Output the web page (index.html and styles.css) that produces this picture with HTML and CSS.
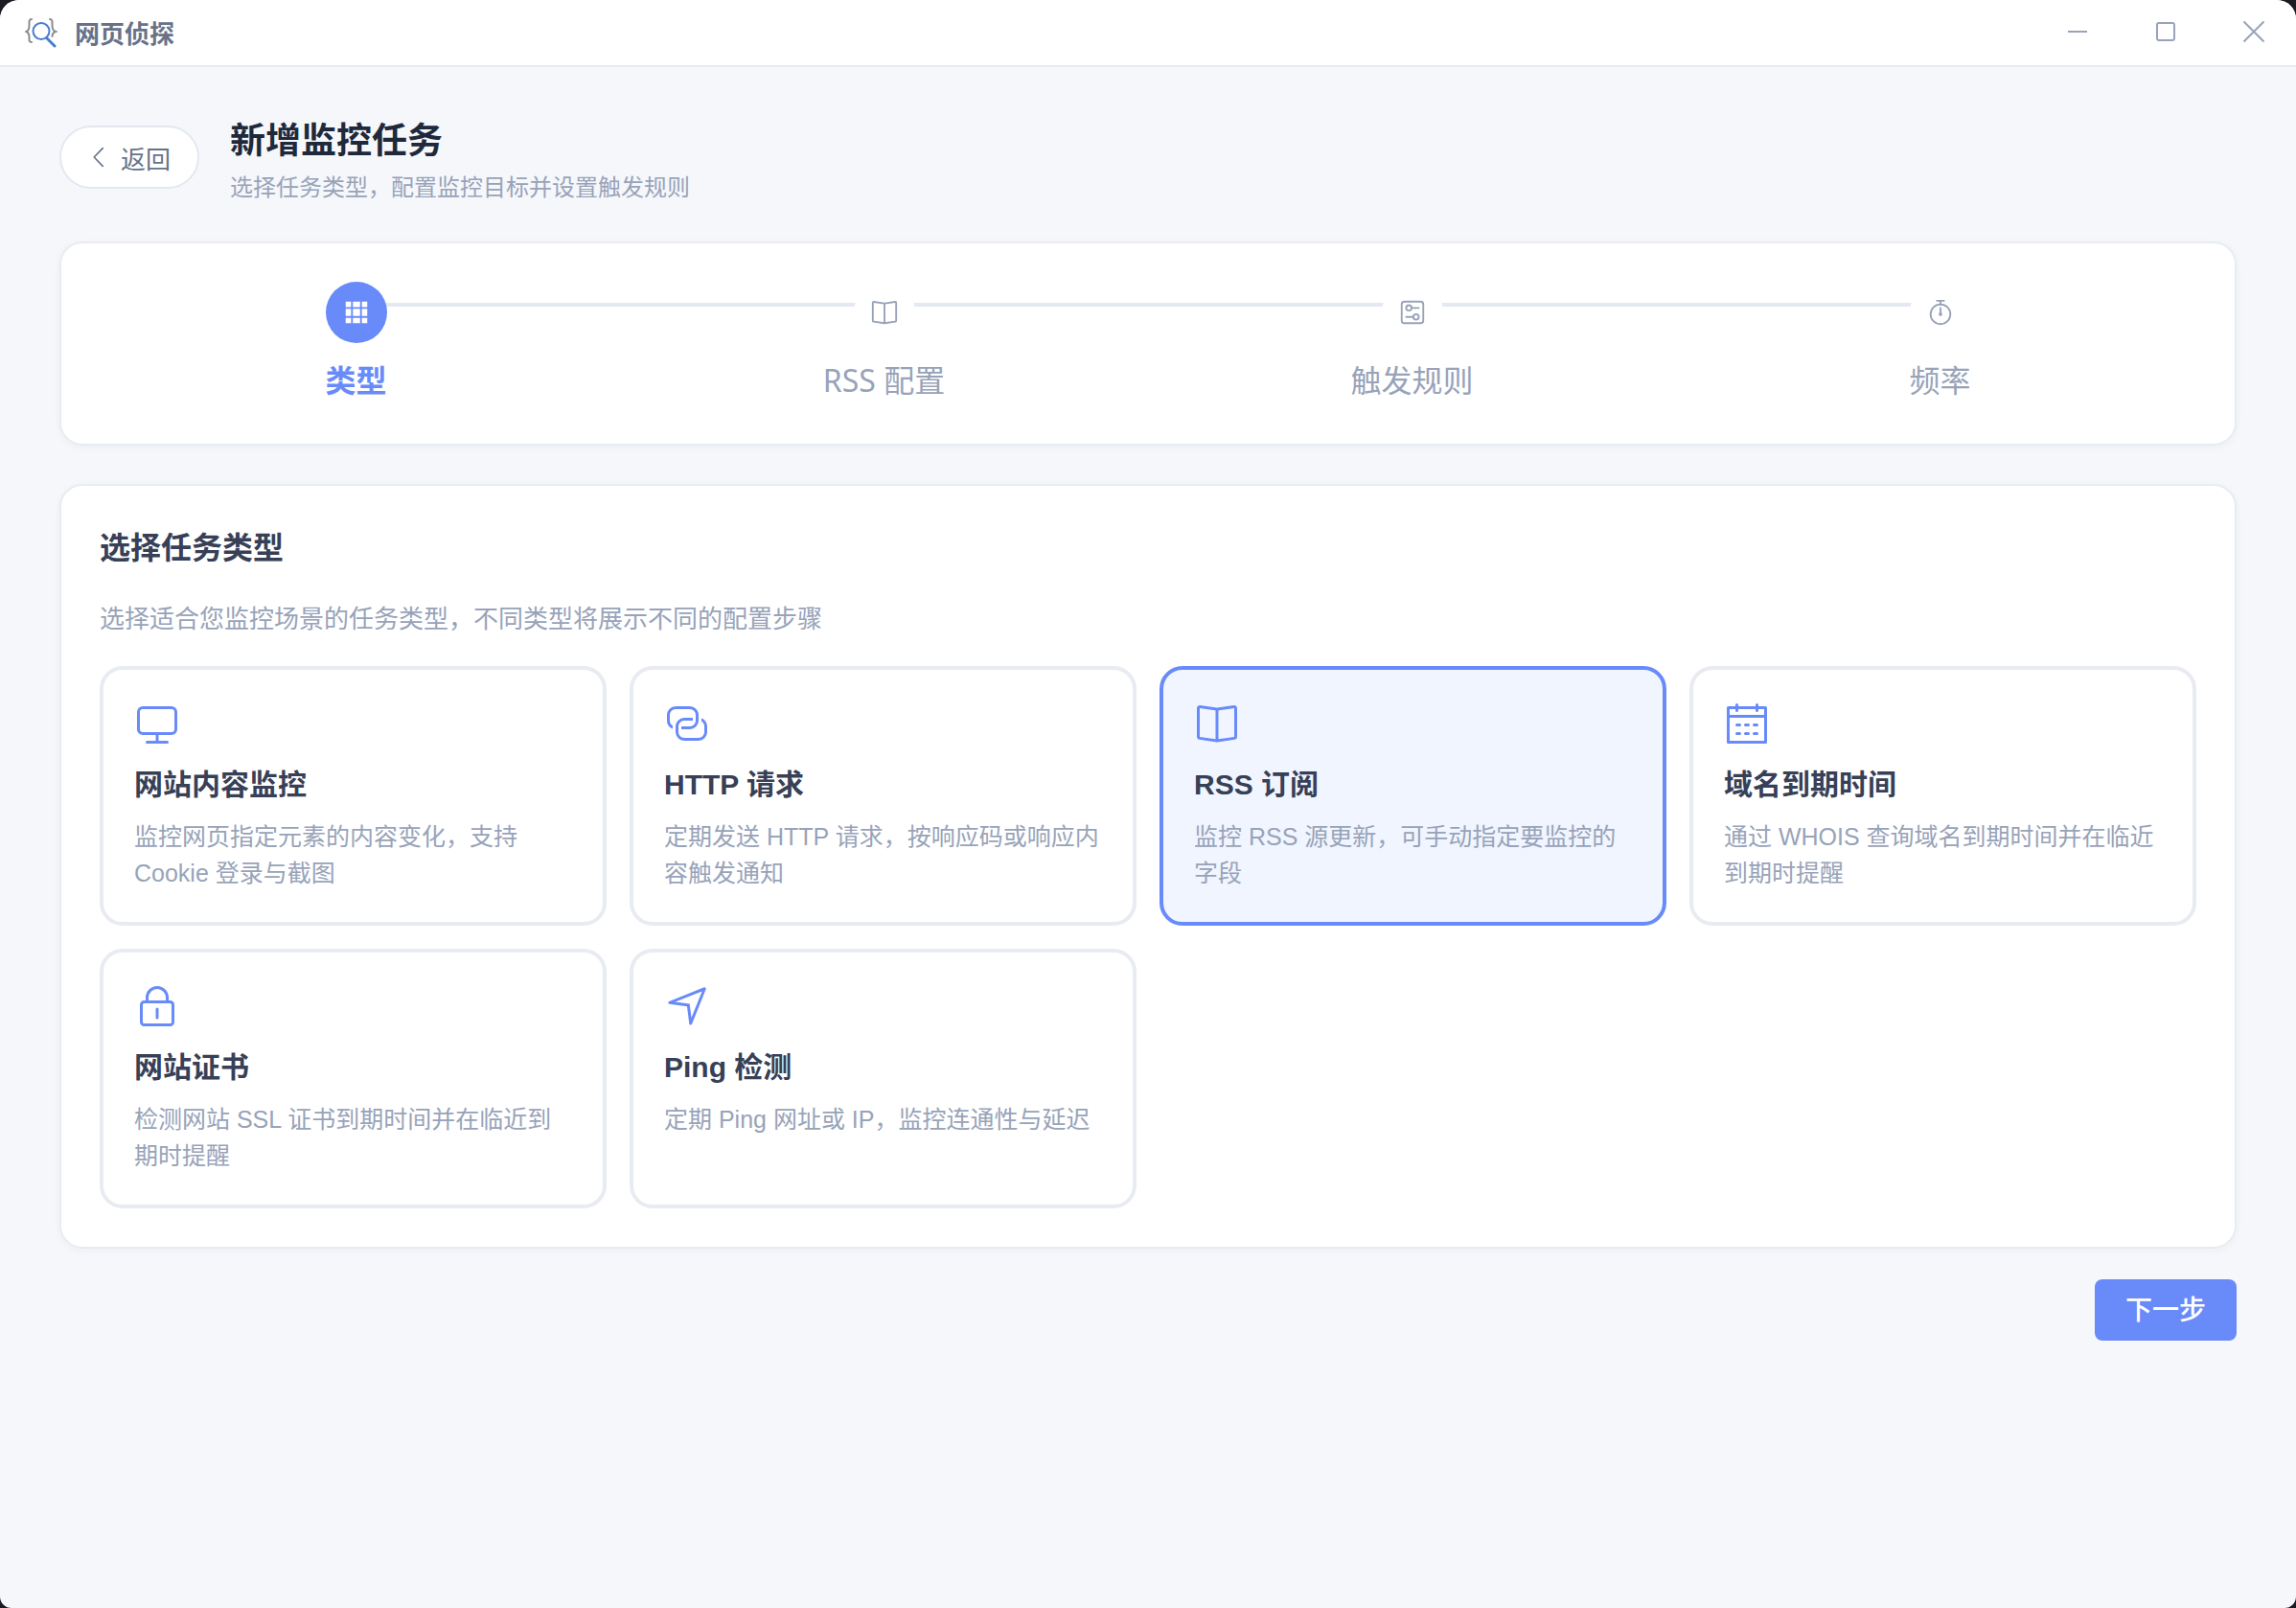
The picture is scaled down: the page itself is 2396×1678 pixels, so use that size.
FILE: index.html
```html
<!DOCTYPE html>
<html lang="zh-CN">
<head>
  <meta charset="UTF-8">
  <meta name="viewport" content="width=device-width, initial-scale=1">
  <title>网页侦探</title>
  <link rel="stylesheet" href="styles.css">
</head>
<body>

  <div class="window">
    <header class="titlebar">
      <div class="brand">
        <svg class="brand-logo" viewBox="0 0 34 34" fill="none" stroke-linecap="round">
          <path d="M7 4C4 4 4.500 7 4.500 10.500S4 16 1.500 17C4 18 4.500 20 4.500 23S4 28 7 28" stroke="#8b8b93" stroke-width="2"/>
          <path d="M26 4C29 4 28.500 7 28.500 10.500S29 16 32 17C29 18 28.500 20 28.500 22" stroke="#8b8b93" stroke-width="2"/>
          <circle cx="17" cy="16.500" r="8.500" stroke="#4a7bd0" stroke-width="2"/>
          <path d="M23 24L31 32" stroke="#4a7bd0" stroke-width="3"/>
        </svg>
        <span>网页侦探</span>
      </div>
      <div class="window-controls">
        <button type="button" aria-label="最小化">
          <svg viewBox="0 0 24 24"><path d="M2 12h20"/></svg>
        </button>
        <button type="button" aria-label="最大化">
          <svg viewBox="0 0 24 24"><rect x="3" y="3" width="18" height="18" rx="2"/></svg>
        </button>
        <button type="button" aria-label="关闭">
          <svg viewBox="0 0 24 24"><path d="M1.500 1.500l21 21M22.500 1.500l-21 21"/></svg>
        </button>
      </div>
    </header>

    <main class="page">
      <div class="page-header">
        <button type="button" class="back-btn">
          <svg class="icon" viewBox="0 0 1024 1024"><path d="M609.408 149.376 277.760 489.600a32 32 0 0 0 0 44.672l331.648 340.352a29.120 29.120 0 0 0 41.728 0 30.592 30.592 0 0 0 0-42.752L339.264 511.936l311.872-319.872a30.592 30.592 0 0 0 0-42.688 29.120 29.120 0 0 0-41.728 0z"/></svg>
          返回
        </button>
        <div>
          <h1>新增监控任务</h1>
          <p>选择任务类型，配置监控目标并设置触发规则</p>
        </div>
      </div>

      <ol class="panel steps">
        <li class="step active">
          <span class="step-icon">
            <svg class="icon" viewBox="0 0 1024 1024"><path d="M640 384v256H384V384h256zm64 0h192v256H704V384zm-64 512H384V704h256v192zm64 0V704h192v192H704zm-64-768v192H384V128h256zm64 0h192v192H704V128zM320 384v256H128V384h192zm0 512H128V704h192v192zm0-768v192H128V128h192z"/></svg>
          </span>
          <span class="step-title">类型</span>
        </li>
        <li class="step">
          <span class="step-icon">
            <svg class="icon" viewBox="0 0 1024 1024"><path d="m512 863.360 384-54.848v-638.720L525.568 222.720a96 96 0 0 1-27.136 0L128 169.792v638.720l384 54.848zM137.024 106.432l370.432 52.928a32 32 0 0 0 9.088 0l370.432-52.928A64 64 0 0 1 960 169.792v638.720a64 64 0 0 1-54.976 63.360l-388.480 55.488a32 32 0 0 1-9.088 0l-388.480-55.488A64 64 0 0 1 64 808.512v-638.720a64 64 0 0 1 73.024-63.360z"/><path d="M480 192h64v704h-64z"/></svg>
          </span>
          <span class="step-title">RSS 配置</span>
        </li>
        <li class="step">
          <span class="step-icon">
            <svg class="icon" viewBox="0 0 1024 1024"><path d="M224 160a64 64 0 0 0-64 64v576a64 64 0 0 0 64 64h576a64 64 0 0 0 64-64V224a64 64 0 0 0-64-64H224zm0-64h576a128 128 0 0 1 128 128v576a128 128 0 0 1-128 128H224A128 128 0 0 1 96 800V224A128 128 0 0 1 224 96z"/><path d="M384 416a64 64 0 1 0 0-128 64 64 0 0 0 0 128zm0 64a128 128 0 1 1 0-256 128 128 0 0 1 0 256z"/><path d="M480 320h256q32 0 32 32t-32 32H480q-32 0-32-32t32-32zm160 416a64 64 0 1 0 0-128 64 64 0 0 0 0 128zm0 64a128 128 0 1 1 0-256 128 128 0 0 1 0 256z"/><path d="M288 640h256q32 0 32 32t-32 32H288q-32 0-32-32t32-32z"/></svg>
          </span>
          <span class="step-title">触发规则</span>
        </li>
        <li class="step">
          <span class="step-icon">
            <svg class="icon" viewBox="0 0 1024 1024"><path d="M512 896a320 320 0 1 0 0-640 320 320 0 0 0 0 640zm0 64a384 384 0 1 1 0-768 384 384 0 0 1 0 768z"/><path d="M512 320a32 32 0 0 1 32 32l-.512 224a32 32 0 1 1-64 0L480 352a32 32 0 0 1 32-32z"/><path d="M448 576a64 64 0 1 0 128 0 64 64 0 1 0-128 0zm96-448v128h-64V128h-96a32 32 0 0 1 0-64h256a32 32 0 1 1 0 64h-96z"/></svg>
          </span>
          <span class="step-title">频率</span>
        </li>
      </ol>

      <section class="panel types">
        <h2>选择任务类型</h2>
        <p class="hint">选择适合您监控场景的任务类型，不同类型将展示不同的配置步骤</p>

        <div class="type-grid">
          <button type="button" class="type-card">
            <svg class="icon" viewBox="0 0 1024 1024"><path d="M544 768v128h192a32 32 0 1 1 0 64H288a32 32 0 1 1 0-64h192V768H192A128 128 0 0 1 64 640V256a128 128 0 0 1 128-128h640a128 128 0 0 1 128 128v384a128 128 0 0 1-128 128H544zM192 192a64 64 0 0 0-64 64v384a64 64 0 0 0 64 64h640a64 64 0 0 0 64-64V256a64 64 0 0 0-64-64H192z"/></svg>
            <span class="type-name">网站内容监控</span>
            <span class="type-desc">监控网页指定元素的内容变化，支持 Cookie 登录与截图</span>
          </button>

          <button type="button" class="type-card">
            <svg class="icon" viewBox="0 0 1024 1024"><path d="M640 384v64H448a128 128 0 0 0-128 128v128a128 128 0 0 0 128 128h320a128 128 0 0 0 128-128V576a128 128 0 0 0-64-110.848V394.880c74.560 26.368 128 97.472 128 181.056v128a192 192 0 0 1-192 192H448a192 192 0 0 1-192-192V576a192 192 0 0 1 192-192h192z"/><path d="M384 640v-64h192a128 128 0 0 0 128-128V320a128 128 0 0 0-128-128H256a128 128 0 0 0-128 128v128a128 128 0 0 0 64 110.848v70.272A192.064 192.064 0 0 1 64 448V320a192 192 0 0 1 192-192h320a192 192 0 0 1 192 192v128a192 192 0 0 1-192 192H384z"/></svg>
            <span class="type-name">HTTP 请求</span>
            <span class="type-desc">定期发送 HTTP 请求，按响应码或响应内容触发通知</span>
          </button>

          <button type="button" class="type-card selected" aria-pressed="true">
            <svg class="icon" viewBox="0 0 1024 1024"><path d="m512 863.360 384-54.848v-638.720L525.568 222.720a96 96 0 0 1-27.136 0L128 169.792v638.720l384 54.848zM137.024 106.432l370.432 52.928a32 32 0 0 0 9.088 0l370.432-52.928A64 64 0 0 1 960 169.792v638.720a64 64 0 0 1-54.976 63.360l-388.480 55.488a32 32 0 0 1-9.088 0l-388.480-55.488A64 64 0 0 1 64 808.512v-638.720a64 64 0 0 1 73.024-63.360z"/><path d="M480 192h64v704h-64z"/></svg>
            <span class="type-name">RSS 订阅</span>
            <span class="type-desc">监控 RSS 源更新，可手动指定要监控的字段</span>
          </button>

          <button type="button" class="type-card">
            <svg class="icon" viewBox="0 0 1024 1024"><path d="M128 384v512h768V192H768v32a32 32 0 1 1-64 0v-32H320v32a32 32 0 0 1-64 0v-32H128v128h768v64H128zm192-256h384V96a32 32 0 1 1 64 0v32h160a32 32 0 0 1 32 32v768a32 32 0 0 1-32 32H96a32 32 0 0 1-32-32V160a32 32 0 0 1 32-32h160V96a32 32 0 0 1 64 0v32zm-32 384h64a32 32 0 0 1 0 64h-64a32 32 0 0 1 0-64zm0 192h64a32 32 0 1 1 0 64h-64a32 32 0 1 1 0-64zm192-192h64a32 32 0 0 1 0 64h-64a32 32 0 0 1 0-64zm0 192h64a32 32 0 1 1 0 64h-64a32 32 0 1 1 0-64zm192-192h64a32 32 0 1 1 0 64h-64a32 32 0 1 1 0-64zm0 192h64a32 32 0 1 1 0 64h-64a32 32 0 1 1 0-64z"/></svg>
            <span class="type-name">域名到期时间</span>
            <span class="type-desc">通过 WHOIS 查询域名到期时间并在临近到期时提醒</span>
          </button>

          <button type="button" class="type-card">
            <svg class="icon" viewBox="0 0 1024 1024"><path d="M224 448a32 32 0 0 0-32 32v384a32 32 0 0 0 32 32h576a32 32 0 0 0 32-32V480a32 32 0 0 0-32-32H224zm0-64h576a96 96 0 0 1 96 96v384a96 96 0 0 1-96 96H224a96 96 0 0 1-96-96V480a96 96 0 0 1 96-96z"/><path d="M512 544a32 32 0 0 1 32 32v192a32 32 0 1 1-64 0V576a32 32 0 0 1 32-32zm192-160v-64a192 192 0 1 0-384 0v64h384zM512 64a256 256 0 0 1 256 256v128H256V320A256 256 0 0 1 512 64z"/></svg>
            <span class="type-name">网站证书</span>
            <span class="type-desc">检测网站 SSL 证书到期时间并在临近到期时提醒</span>
          </button>

          <button type="button" class="type-card">
            <svg class="icon" viewBox="0 0 1024 1024"><path d="m249.600 417.088 319.744 43.072 39.168 310.272L845.120 178.880 249.600 417.088zm-129.024 47.168a32 32 0 0 1-7.680-61.440l777.792-311.040a32 32 0 0 1 41.600 41.600l-310.720 775.680a32 32 0 0 1-61.440-7.808L512 516.992l-391.424-52.736z"/></svg>
            <span class="type-name">Ping 检测</span>
            <span class="type-desc">定期 Ping 网址或 IP，监控连通性与延迟</span>
          </button>
        </div>
      </section>

      <div class="actions">
        <button type="button" class="next-btn">下一步</button>
      </div>
    </main>
  </div>

</body>
</html>
```
FILE: styles.css
```css
* {
  box-sizing: border-box;
}

body {
  margin: 0;
  background: #1c1a22;
  font-family: "Liberation Sans", "Noto Sans CJK SC", sans-serif;
  color: #374056;
}

button {
  font-family: inherit;
  cursor: pointer;
}

h1, h2, p, ol {
  margin: 0;
  padding: 0;
}

.icon {
  display: block;
  fill: currentColor;
  flex-shrink: 0;
}

.window {
  min-height: 100vh;
  background: #f5f7fb;
  border-radius: 20px 20px 12px 12px;
  overflow: hidden;
}

/* title bar */
.titlebar {
  display: flex;
  justify-content: space-between;
  height: 70px;
  padding-bottom: 2px;
  background: #fff;
  border-bottom: 2px solid #e7eaf0;
}

.brand {
  display: flex;
  align-items: center;
  gap: 18px;
  padding-left: 26px;
  font-size: 26px;
  font-weight: 600;
  color: #67728a;
}

.brand-logo {
  width: 34px;
  height: 34px;
}

.window-controls {
  display: flex;
  gap: 4px;
}

.window-controls button {
  display: flex;
  align-items: center;
  justify-content: center;
  width: 88px;
  padding: 0;
  border: 0;
  background: none;
}

.window-controls svg {
  width: 24px;
  height: 24px;
  fill: none;
  stroke: #98a3b9;
  stroke-width: 2;
}

/* page */
.page {
  padding: 46px 62px;
}

.page-header {
  display: flex;
  align-items: center;
  gap: 32px;
  margin-bottom: 40px;
}

.back-btn {
  display: flex;
  align-items: center;
  gap: 8px;
  height: 66px;
  padding: 0 28px 0 26px;
  border: 2px solid #e3e8f0;
  border-radius: 33px;
  background: #fff;
  color: #67728a;
  font-size: 26px;
}

.back-btn .icon {
  width: 28px;
  height: 28px;
}

.page-header h1 {
  font-size: 37px;
  line-height: 64px;
  color: #1e293b;
}

.page-header p {
  font-size: 24px;
  line-height: 32px;
  color: #98a3b9;
}

.panel {
  background: #fff;
  border: 2px solid #e8ecf1;
  border-radius: 24px;
  box-shadow: 0 2px 8px rgba(30, 41, 59, 0.04);
}

/* steps */
.steps {
  display: flex;
  padding: 40px 32px;
  margin-bottom: 40px;
  list-style: none;
}

.step {
  position: relative;
  display: flex;
  flex: 1;
  flex-direction: column;
  align-items: center;
  gap: 12px;
  color: #98a3b9;
}

/* connector to the next step, runs behind the icons */
.step:not(:last-child)::before {
  content: "";
  position: absolute;
  top: 22px;
  left: 50%;
  width: 100%;
  height: 4px;
  background: #e3e8f1;
}

.step-icon {
  display: flex;
  align-items: center;
  justify-content: center;
  position: relative;
  z-index: 1;
  width: 64px;
  height: 64px;
  border-radius: 50%;
  background: #fff;
}

.step-icon .icon {
  width: 30px;
  height: 30px;
}

.step-title {
  font-family: "Noto Sans", "Noto Sans CJK SC", sans-serif;
  font-size: 32px;
  line-height: 53px;
}

.step.active .step-icon {
  background: #698bfa;
  color: #fff;
}

.step.active .step-title {
  color: #698bfa;
  font-weight: 700;
}

/* task types */
.types {
  padding: 40px;
}

.types h2 {
  font-size: 32px;
  line-height: 50px;
}

.hint {
  margin: 28px 0;
  font-size: 26px;
  line-height: 42px;
  color: #98a3b9;
}

.type-grid {
  display: grid;
  grid-template-columns: repeat(4, 1fr);
  gap: 24px;
}

.type-card {
  display: flex;
  flex-direction: column;
  align-items: flex-start;
  padding: 32px;
  border: 4px solid #e8ebf1;
  border-radius: 24px;
  background: #fff;
  text-align: left;
  color: #374056;
}

.type-card.selected {
  border-color: #698bfa;
  background: #f0f5ff;
}

.type-card .icon {
  width: 48px;
  height: 48px;
  color: #698bfa;
}

.type-name {
  margin: 16px 0 12px;
  font-size: 30px;
  font-weight: 700;
  line-height: 47px;
}

.type-desc {
  font-size: 25px;
  line-height: 38px;
  color: #98a3b9;
}

.actions {
  display: flex;
  justify-content: flex-end;
  margin-top: 32px;
}

.next-btn {
  height: 64px;
  padding: 0 32px 4px;
  border: 0;
  border-radius: 8px;
  background: #698bfa;
  color: #fff;
  font-size: 28px;
  font-weight: 500;
}
```
